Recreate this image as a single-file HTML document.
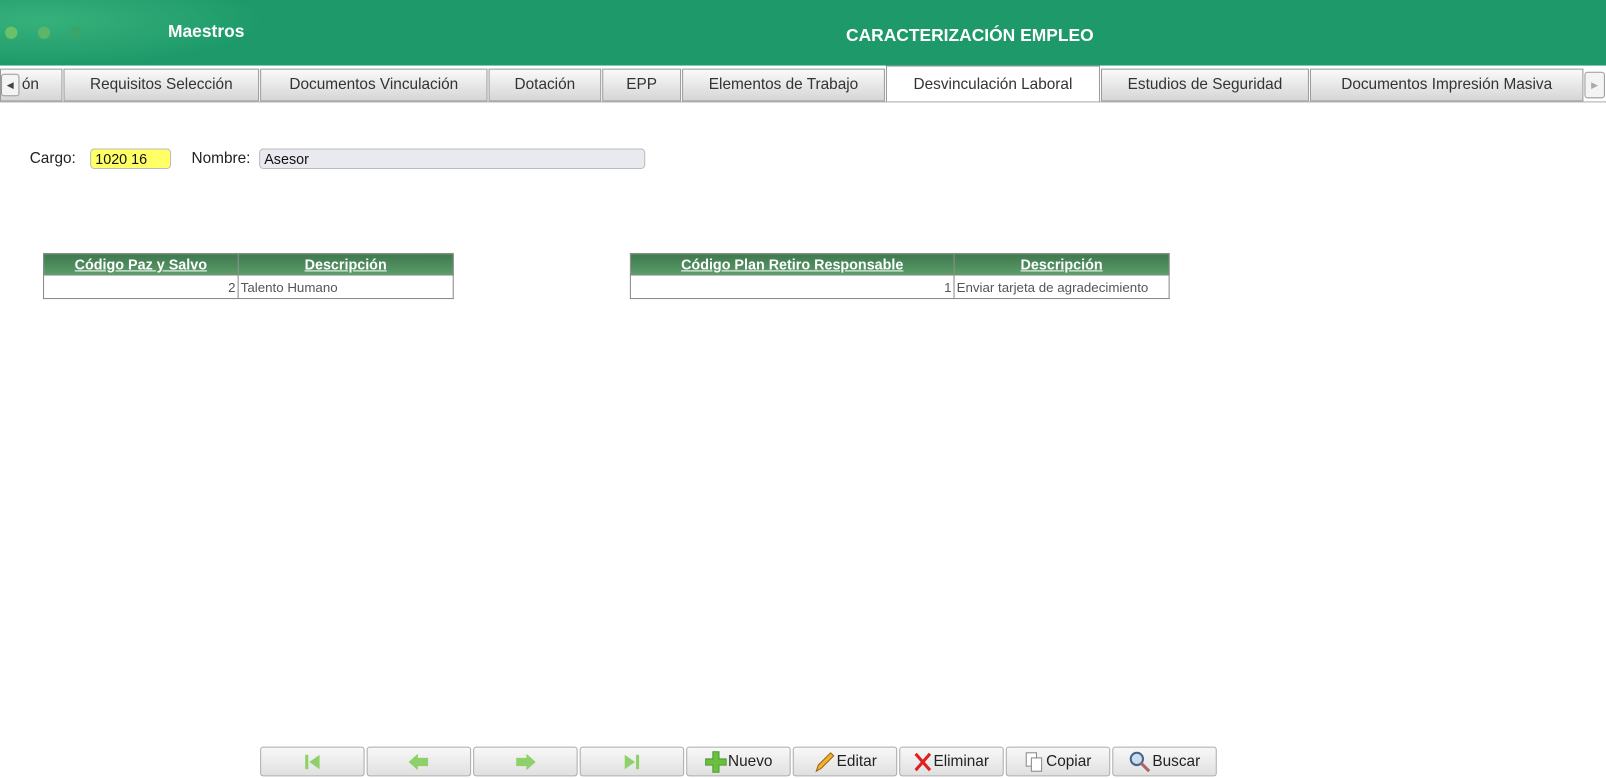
<!DOCTYPE html>
<html><head><meta charset="utf-8"><style>
*{box-sizing:border-box;margin:0;padding:0}
body{width:1606px;height:778px;background:#fff;font-family:"Liberation Sans",sans-serif;position:relative;overflow:hidden}
#w{position:absolute;left:0;top:0;width:1568px;height:760px;transform:scale(1.0242);transform-origin:0 0}
.hdr{position:absolute;left:0;top:0;width:1580px;height:64px;background:#1e9a6a}
.glow{position:absolute;left:0;top:0;width:260px;height:64px;background:radial-gradient(ellipse at 40px 20px,rgba(80,200,140,.5),rgba(30,154,106,0) 70%)}
.dot{position:absolute;top:26px;width:12px;height:12px;border-radius:50%}
.t1{position:absolute;left:164px;top:21px;color:#fff;font-weight:bold;font-size:17px}
.t2{position:absolute;left:826px;top:25px;color:#fff;font-weight:bold;font-size:17px}
.tab{position:absolute;top:67px;height:32px;border:1px solid #999;background:linear-gradient(#fafafa,#e4e4e4 60%,#d6d6d6);font-size:15px;color:#333;text-align:center;line-height:30px}
.tab.act{top:64px;height:36px;background:#fff;border-bottom:none;line-height:36px}
.line{position:absolute;left:0;top:99px;width:1580px;height:1px;background:#aaa}
.lbl{position:absolute;font-size:15px;color:#222}
.inp{position:absolute;height:20px;border:1px solid #bbb;border-radius:4px;font-size:14px;padding-left:4px;line-height:18px;color:#111}
table{position:absolute;border-collapse:collapse;font-size:13px}
th{background:linear-gradient(#3f7a4e,#4d8a5c 50%,#5aa06a);color:#fff;text-decoration:underline;font-size:14px;height:21px;border:1px solid #888;font-weight:bold}
td{border:1px solid #888;height:23px;color:#555;padding:0 2px}
.btn{position:absolute;top:729px;height:29px;width:102px;border:1px solid #aaa;border-radius:3px;background:linear-gradient(#f8f8f8,#e0e0e0);font-size:15px;color:#222;display:flex;align-items:center;justify-content:center;gap:1px}
</style></head><body><div id="w">
<div class="hdr"><div class="glow"></div>
<div class="dot" style="left:5px;background:#6cc06a"></div>
<div class="dot" style="left:37px;background:#5db56a"></div>
<div class="dot" style="left:68px;background:#3aa56a"></div>
<div class="t1">Maestros</div><div class="t2">CARACTERIZACIÓN EMPLEO</div></div>
<div class="tab" style="left:0;width:61px;text-align:right;padding-right:22px">ón</div>
<div style="position:absolute;left:1px;top:72px;width:18px;height:22px;border:1px solid #999;border-radius:3px;background:#f4f4f4;font-size:9px;line-height:20px;text-align:center;color:#444">◀</div>
<div class="tab" style="left:62px;width:191px">Requisitos Selección</div>
<div class="tab" style="left:254px;width:222px">Documentos Vinculación</div>
<div class="tab" style="left:477px;width:110px">Dotación</div>
<div class="tab" style="left:588px;width:77px">EPP</div>
<div class="tab" style="left:666px;width:198px">Elementos de Trabajo</div>
<div class="tab act" style="left:865px;width:209px">Desvinculación Laboral</div>
<div class="tab" style="left:1075px;width:203px">Estudios de Seguridad</div>
<div class="tab" style="left:1279px;width:267px">Documentos Impresión Masiva</div>
<div style="position:absolute;left:1547px;top:70px;width:20px;height:26px;border:1px solid #999;border-radius:3px;background:#f4f4f4;font-size:9px;line-height:24px;text-align:center;color:#aaa">▶</div>
<div class="line"></div>
<div class="lbl" style="left:29px;top:146px">Cargo:</div>
<div class="inp" style="left:88px;top:145px;width:79px;background:#ffff66">1020 16</div>
<div class="lbl" style="left:187px;top:146px">Nombre:</div>
<div class="inp" style="left:253px;top:145px;width:377px;background:#e9e9f0">Asesor</div>
<table style="left:42px;top:247px;width:401px"><tr><th style="width:190px">Código Paz y Salvo</th><th>Descripción</th></tr><tr><td style="text-align:right">2</td><td>Talento Humano</td></tr></table>
<table style="left:615px;top:247px;width:527px"><tr><th style="width:316px">Código Plan Retiro Responsable</th><th>Descripción</th></tr><tr><td style="text-align:right">1</td><td>Enviar tarjeta de agradecimiento</td></tr></table>
<div class="btn" style="left:254px"><svg width="20" height="20"><rect x="3" y="3" width="3" height="14" fill="#8fd06a"/><path d="M17 3 L7 10 L17 17Z" fill="#8fd06a"/></svg></div>
<div class="btn" style="left:358px"><svg width="24" height="20"><path d="M2 10 L11 2 V6 H21 V14 H11 V18Z" fill="#8fd06a"/></svg></div>
<div class="btn" style="left:462px"><svg width="24" height="20"><path d="M22 10 L13 2 V6 H3 V14 H13 V18Z" fill="#8fd06a"/></svg></div>
<div class="btn" style="left:566px"><svg width="20" height="20"><rect x="14" y="3" width="3" height="14" fill="#8fd06a"/><path d="M3 3 L13 10 L3 17Z" fill="#8fd06a"/></svg></div>
<div class="btn" style="left:670px"><svg width="22" height="22"><path d="M8 1h6v7h7v6h-7v7h-6v-7h-7v-6h7z" fill="#6cc040" stroke="#4a9a30"/></svg>Nuevo</div>
<div class="btn" style="left:774px"><svg width="22" height="22"><path d="M3 20 L5 14 L17 2 L20 5 L8 17Z" fill="#f0b030" stroke="#a06010"/></svg>Editar</div>
<div class="btn" style="left:878px"><svg width="18" height="20"><path d="M2 2 L16 18 M16 2 L2 18" stroke="#e02020" stroke-width="3"/></svg>Eliminar</div>
<div class="btn" style="left:982px"><svg width="20" height="22"><rect x="2" y="2" width="10" height="13" fill="#fff" stroke="#888"/><rect x="7" y="7" width="10" height="13" fill="#fff" stroke="#888"/></svg>Copiar</div>
<div class="btn" style="left:1086px"><svg width="22" height="22"><circle cx="8" cy="8" r="6" fill="#cde" stroke="#468" stroke-width="2"/><path d="M12 12 L20 20" stroke="#a66" stroke-width="3"/></svg>Buscar</div>
</div></body></html>
